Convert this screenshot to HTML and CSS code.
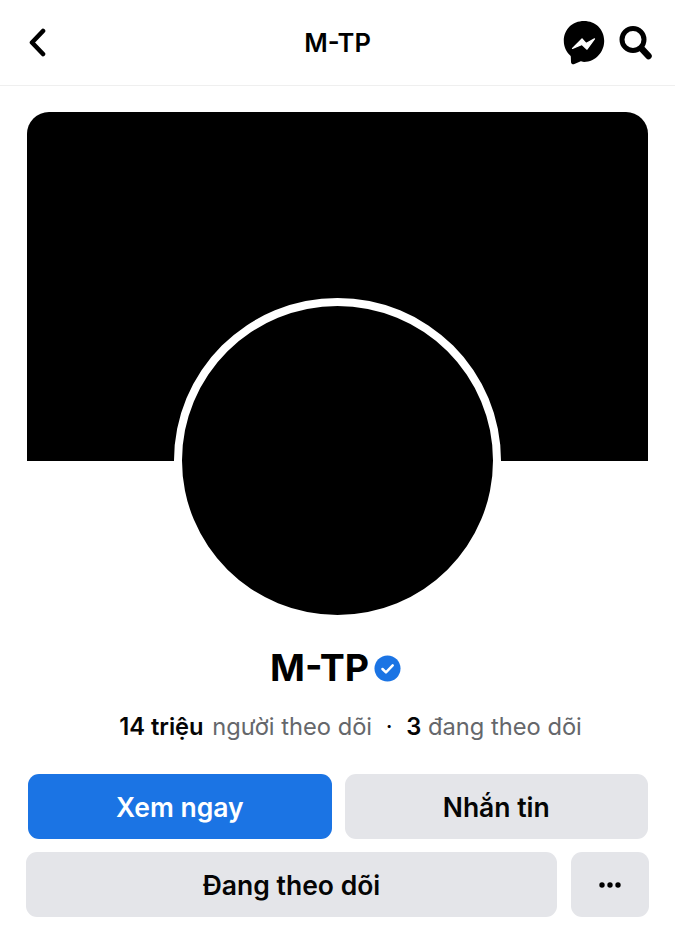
FILE: index.html
```html
<!DOCTYPE html>
<html lang="vi">
<head>
  <meta charset="UTF-8" />
  <meta name="viewport" content="width=device-width, initial-scale=1.0" />
  <title>M-TP</title>
  <link rel="stylesheet" href="styles.css">
</head>
<body>
  <header class="topbar">
    <a class="back" href="#" aria-label="Back">
      <svg width="20" height="30" viewBox="0 0 20 30"><path d="M15 3 L4 14.5 L15 26" fill="none" stroke="#000" stroke-width="4.6" stroke-linecap="round" stroke-linejoin="round"/></svg>
    </a>
    <div class="topbar-title">M-TP</div>
    <div class="topbar-icons">
      <svg width="42" height="46" viewBox="0 0 42 46"><path d="M21 1C9.5 1 .8 9.4.8 20.8c0 6 2.4 11.1 6.4 14.6.4.3.6.8.6 1.3l.2 5.3c.1 1.700 1.800 2.800 3.400 2.100l5.800-2.600c.5-.2 1-.3 1.500-.1 1.100.3 1.900.5 2.300.5C32.500 41.900 41.200 32.200 41.200 20.800 41.200 9.400 32.500 1 21 1Z" fill="#000"/><path d="M9.500 28.500 19 18.800 23 23.500 31.500 18.800 24 29.200 19 24.500Z" fill="#fff" stroke="#fff" stroke-width="1.200" stroke-linejoin="round"/></svg>
      <svg width="36" height="36" viewBox="0 0 36 36"><circle cx="16" cy="14.500" r="11" fill="none" stroke="#000" stroke-width="5"/><path d="M24.500 23.500 L31.500 31" stroke="#000" stroke-width="6.500" stroke-linecap="round"/></svg>
    </div>
  </header>

  <main>
    <div class="cover"></div>
    <div class="avatar"></div>

    <h1 class="name">
      M-TP
      <svg class="verified" width="27" height="27" viewBox="0 0 28 28"><circle cx="14" cy="14" r="13.500" fill="#1b74e4"/><path d="M8.800 14.500 L12.400 18 L19.400 10.800" fill="none" stroke="#fff" stroke-width="2.600" stroke-linecap="round" stroke-linejoin="round"/></svg>
    </h1>

    <p class="stats">
      <b class="stat-count">14 triệu</b> người theo dõi <span class="dot">·</span> <b>3</b> đang theo dõi
    </p>

    <div class="actions actions-top">
      <button class="btn btn-primary">Xem ngay</button>
      <button class="btn">Nhắn tin</button>
    </div>
    <div class="actions actions-bottom">
      <button class="btn btn-follow">Đang theo dõi</button>
      <button class="btn btn-more" aria-label="More">
        <svg width="22" height="6" viewBox="0 0 22 6"><circle cx="3" cy="3" r="2.700"/><circle cx="11" cy="3" r="2.700"/><circle cx="19" cy="3" r="2.700"/></svg>
      </button>
    </div>
  </main>
</body>
</html>
```

FILE: styles.css
```css
body {
  font-family: Inter, "Noto Sans", sans-serif;
  background-color: #fff;
  color: #000;
  margin: 0;
  height: 937px;
  overflow: hidden;
}

.topbar {
  display: grid;
  grid-template-columns: 1fr auto 1fr;
  align-items: center;
  height: 85px;
  padding: 0 22px 0 28px;
  border-bottom: 1px solid #efefef;
}
.back {
  display: flex;
}
.topbar-title {
  font-size: 25.500px;
  font-weight: 600;
  margin-left: -6px;
}
.topbar-icons {
  display: flex;
  justify-content: flex-end;
  align-items: center;
  gap: 12px;
}

.cover {
  height: 349px;
  margin: 26px 27px 0;
  background-color: #000;
  border-radius: 22px 22px 0 0;
}
.avatar {
  width: 311px;
  height: 309px;
  margin: -163px auto 0;
  background-color: #000;
  border: 8px solid #fff;
  border-radius: 50%;
  position: relative;
}

.name {
  display: flex;
  justify-content: center;
  align-items: center;
  gap: 5px;
  margin: 22px 0 0;
  padding-right: 4px;
  font-size: 37.500px;
  font-weight: 700;
  line-height: 46px;
}
.stats {
  margin: 21px 0 0;
  padding-left: 26px;
  text-align: center;
  font-size: 23.700px;
  line-height: 30px;
  color: #65676b;
}
.stats b {
  color: #050505;
  font-weight: 600;
}
.stat-count {
  margin-right: 2px;
}
.dot {
  margin: 0 7px;
  color: #050505;
}

.actions {
  display: flex;
}
.actions-top {
  gap: 13px;
  margin: 32px 27px 0 28px;
}
.actions-bottom {
  gap: 14px;
  margin: 13px 26px 0;
}
.btn {
  display: flex;
  justify-content: center;
  align-items: center;
  flex: 1;
  height: 65px;
  padding: 0;
  border: none;
  border-radius: 11px;
  background-color: #e4e5e9;
  color: #050505;
  font-family: inherit;
  font-size: 26.500px;
  font-weight: 600;
}
.btn-primary {
  background-color: #1b74e4;
  color: #fff;
}
.btn-more {
  flex: 0 0 78px;
}
```
